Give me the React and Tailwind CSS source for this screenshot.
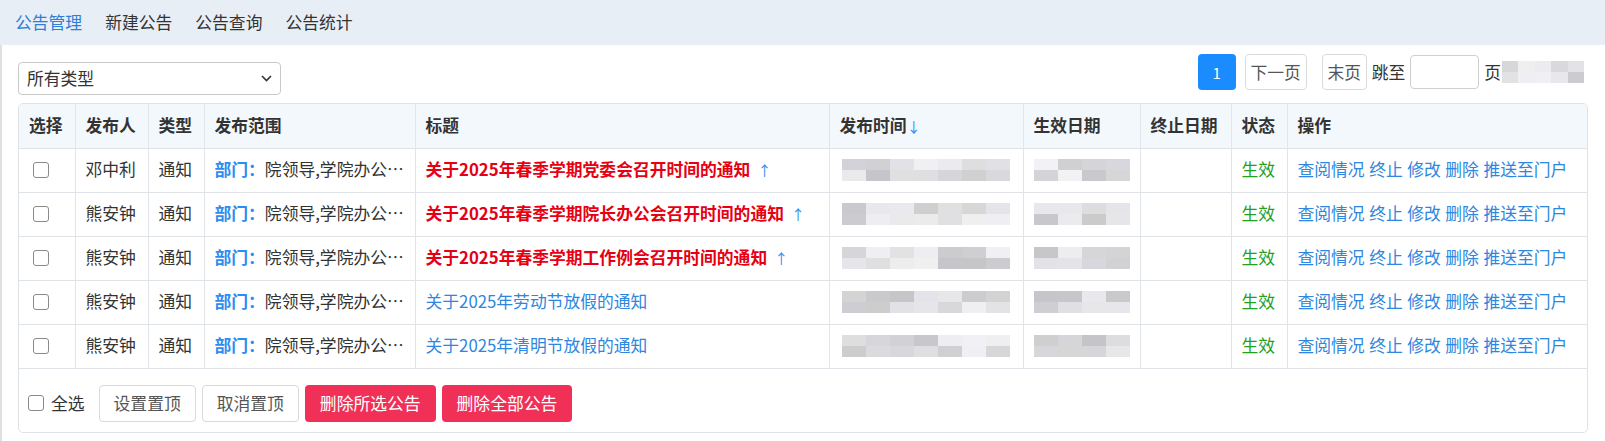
import React from "react";

const FONT = { fontFamily: '"Noto Sans CJK SC", "Noto Sans", sans-serif' };

const rows = [
  { name: "邓中利", title: "关于2025年春季学期党委会召开时间的通知", top: true, seed: 11 },
  { name: "熊安钟", title: "关于2025年春季学期院长办公会召开时间的通知", top: true, seed: 23 },
  { name: "熊安钟", title: "关于2025年春季学期工作例会召开时间的通知", top: true, seed: 37 },
  { name: "熊安钟", title: "关于2025年劳动节放假的通知", seed: 41 },
  { name: "熊安钟", title: "关于2025年清明节放假的通知", seed: 59 },
];

/* blurred (pixelated) placeholder for hidden values */
function Mosaic({ cols, cell = 24, h = 11, seed = 1 }) {
  let s = seed * 7919;
  const rand = () => {
    s = (s * 9301 + 49297) % 233280;
    return s / 233280;
  };
  const cells = [];
  for (let i = 0; i < cols * 2; i++) {
    const v = Math.round(196 + rand() * 46);
    const b = Math.round(rand() * 6);
    cells.push(`rgb(${v},${v},${Math.min(255, v + b)})`);
  }
  return (
    <div className="grid" style={{ gridTemplateColumns: `repeat(${cols}, ${cell}px)` }}>
      {cells.map((c, i) => (
        <div key={i} style={{ height: h, background: c }} />
      ))}
    </div>
  );
}

function Box() {
  return (
    <span className="inline-block h-4 w-4 shrink-0 rounded-[3px] border border-[#8a8a8a] bg-white" />
  );
}

const cols = [56, 73, 56, 211, 414, 194, 117, 91, 56, 302];

export default function App() {
  return (
    <div className="min-h-[441px] bg-white text-[16.8px] text-[#333]" style={FONT}>
      {/* top tabs */}
      <nav className="flex h-[45px] items-center gap-[23px] bg-[#e8eef5] pl-[15px] leading-none">
        <span className="text-[#2d7fd8]">公告管理</span>
        <span>新建公告</span>
        <span>公告查询</span>
        <span>公告统计</span>
      </nav>

      <div className="min-h-[396px] border-l-2 border-[#e0e0e0] pl-4 pr-[17px] pt-[9px]">
        {/* filter + pager */}
        <div className="flex items-start justify-between">
          <div className="mt-[8px] flex h-[33px] w-[263px] items-center justify-between rounded-[4px] border border-[#c9c9c9] pl-[8px] pr-[8px] leading-none">
            <span>所有类型</span>
            <svg width="11" height="7" viewBox="0 0 11 7" fill="none" stroke="#333" strokeWidth="1.6">
              <path d="M1 1l4.5 4.5L10 1" />
            </svg>
          </div>

          <div className="mr-[4px] flex items-center leading-none">
            <span className="flex h-[36px] w-[38px] items-center justify-center rounded-[4px] bg-[#1a8cff] text-[15px] text-white">
              1
            </span>
            <span className="ml-[9px] flex h-[36px] w-[62px] items-center justify-center rounded-[4px] border border-[#dadada] text-[#555]">
              下一页
            </span>
            <span className="ml-[15px] flex h-[36px] w-[45px] items-center justify-center rounded-[4px] border border-[#dadada] text-[#555]">
              末页
            </span>
            <span className="ml-[5px]">跳至</span>
            <span className="ml-[5px] h-[34px] w-[69px] rounded-[4px] border border-[#cfcfcf]" />
            <span className="ml-[5px]">页</span>
            <div className="ml-[1px]">
              <Mosaic cols={5} cell={16.4} h={11} seed={3} />
            </div>
          </div>
        </div>

        {/* table card */}
        <div className="mt-[8px] overflow-hidden rounded-[5px] border border-[#dfe3e8]">
          <table className="w-full table-fixed border-collapse">
            <colgroup>
              {cols.map((w, i) => (
                <col key={i} style={{ width: w }} />
              ))}
            </colgroup>
            <thead>
              <tr className="h-[44px] border-b border-[#dfe3e8] bg-[#f3f8fd] text-left font-bold">
                {["选择", "发布人", "类型", "发布范围", "标题"].map((t) => (
                  <th key={t} className="border-r border-[#e1e5ea] px-[10px] font-bold">
                    {t}
                  </th>
                ))}
                <th className="border-r border-[#e1e5ea] px-[10px] font-bold">
                  发布时间<span className="text-[14px] font-normal text-[#2d8cf0]">↓</span>
                </th>
                {["生效日期", "终止日期", "状态"].map((t) => (
                  <th key={t} className="border-r border-[#e1e5ea] px-[10px] font-bold">
                    {t}
                  </th>
                ))}
                <th className="px-[10px] font-bold">操作</th>
              </tr>
            </thead>
            <tbody>
              {rows.map((r, i) => (
                <tr key={i} className="h-[44px] border-b border-[#dfe3e8]">
                  <td className="border-r border-[#e1e5ea] pl-[14px]">
                    <div className="flex items-center">
                      <Box />
                    </div>
                  </td>
                  <td className="border-r border-[#e1e5ea] px-[10px]">{r.name}</td>
                  <td className="border-r border-[#e1e5ea] px-[10px]">通知</td>
                  <td className="whitespace-nowrap border-r border-[#e1e5ea] px-[10px]">
                    <span className="font-bold text-[#2d8cf0]">部门：</span>
                    院领导,学院办公…
                  </td>
                  <td className="whitespace-nowrap border-r border-[#e1e5ea] px-[10px]">
                    {r.top ? (
                      <>
                        <span className="font-bold text-[#e60012]">{r.title}</span>
                        <span className="ml-[7px] text-[14px] text-[#2d8cf0]">↑</span>
                      </>
                    ) : (
                      <span className="text-[#2e86de]">{r.title}</span>
                    )}
                  </td>
                  <td className="border-r border-[#e1e5ea] pl-[12px]">
                    <Mosaic cols={7} seed={r.seed} />
                  </td>
                  <td className="border-r border-[#e1e5ea] pl-[10px]">
                    <Mosaic cols={4} seed={r.seed + 5} />
                  </td>
                  <td className="border-r border-[#e1e5ea]" />
                  <td className="border-r border-[#e1e5ea] px-[10px] text-[#1fa01f]">生效</td>
                  <td className="px-[10px]">
                    <div className="flex gap-[4.5px] whitespace-nowrap text-[#2e86de]">
                      <span>查阅情况</span>
                      <span>终止</span>
                      <span>修改</span>
                      <span>删除</span>
                      <span>推送至门户</span>
                    </div>
                  </td>
                </tr>
              ))}
            </tbody>
          </table>

          {/* bulk actions */}
          <div className="flex items-center pb-[10px] pl-[9px] pt-[16px] leading-none">
            <Box />
            <span className="ml-[7px]">全选</span>
            <div className="ml-[14px] flex gap-[6px]">
              <button className="h-[37px] rounded-[4px] border border-[#d9d9d9] bg-white px-[14px] text-[#555]">
                设置置顶
              </button>
              <button className="h-[37px] rounded-[4px] border border-[#d9d9d9] bg-white px-[14px] text-[#555]">
                取消置顶
              </button>
              <button className="h-[37px] rounded-[4px] bg-[#f03057] px-[15px] text-white">
                删除所选公告
              </button>
              <button className="h-[37px] rounded-[4px] bg-[#f03057] px-[15px] text-white">
                删除全部公告
              </button>
            </div>
          </div>
        </div>
      </div>
    </div>
  );
}
